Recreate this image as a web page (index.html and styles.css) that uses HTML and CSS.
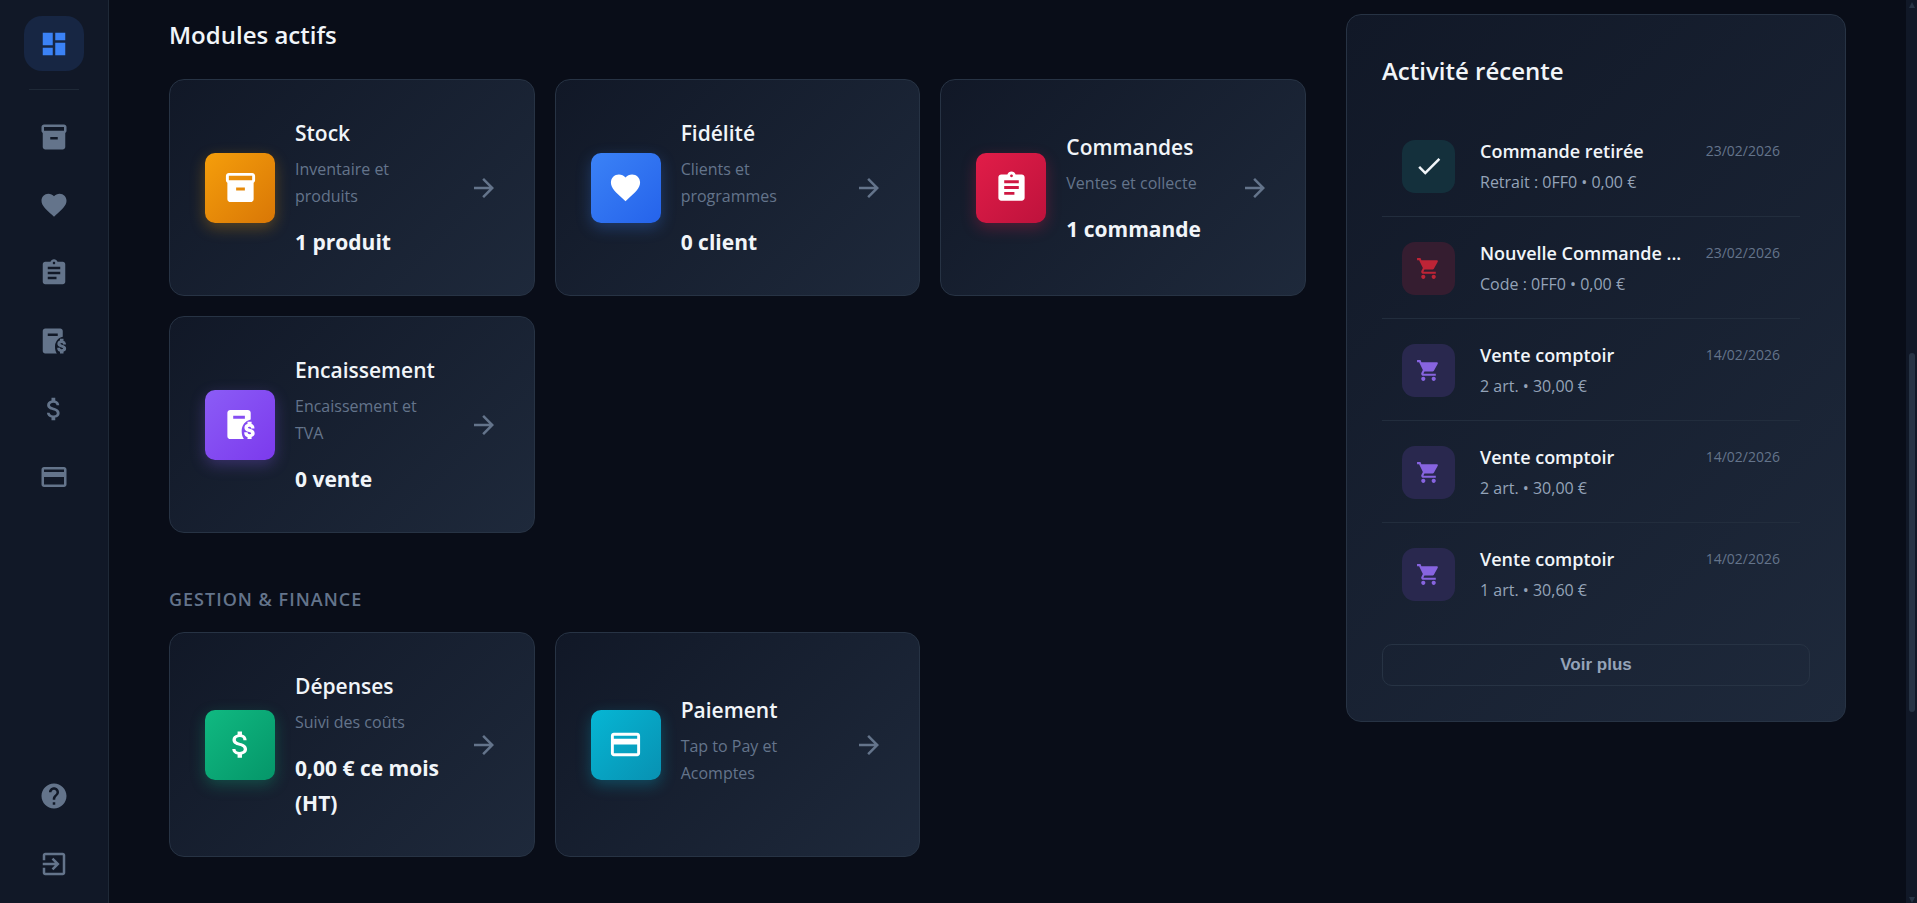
FILE: index.html
```html
<!DOCTYPE html>
<html lang="fr">
<head>
  <meta charset="UTF-8">
  <meta name="viewport" content="width=device-width, initial-scale=1.0">
  <title>Tableau de bord</title>
  <link rel="stylesheet" href="styles.css">
</head>
<body>
  <!-- Shared icons -->
  <svg class="sprite" aria-hidden="true">
    <symbol id="i-dashboard" viewBox="0 0 24 24"><path d="M3 13h8V3H3v10zm0 8h8v-6H3v6zm10 0h8V11h-8v10zm0-18v6h8V3h-8z"/></symbol>
    <symbol id="i-stock" viewBox="0 0 24 24"><path d="M20 2H4c-1 0-2 .9-2 2v3.01c0 .72.43 1.34 1 1.69V20c0 1.1 1.1 2 2 2h14c.9 0 2-.9 2-2V8.7c.57-.35 1-.97 1-1.69V4c0-1.1-1-2-2-2zm-5 12H9v-2h6v2zm5-7H4V4h16v3z"/></symbol>
    <symbol id="i-heart" viewBox="0 0 24 24"><path d="M12 21.35l-1.45-1.32C5.4 15.36 2 12.28 2 8.5 2 5.42 4.42 3 7.5 3c1.74 0 3.41.81 4.5 2.09C13.09 3.81 14.76 3 16.5 3 19.58 3 22 5.42 22 8.5c0 3.78-3.4 6.86-8.55 11.54L12 21.35z"/></symbol>
    <symbol id="i-orders" viewBox="0 0 24 24"><path d="M19 3h-4.18C14.4 1.84 13.3 1 12 1c-1.3 0-2.4.84-2.82 2H5c-1.1 0-2 .9-2 2v14c0 1.1.9 2 2 2h14c1.1 0 2-.9 2-2V5c0-1.1-.9-2-2-2zm-7 0c.55 0 1 .45 1 1s-.45 1-1 1-1-.45-1-1 .45-1 1-1zm2 14H7v-2h7v2zm3-4H7v-2h10v2zm0-4H7V7h10v2z"/></symbol>
    <symbol id="i-register" viewBox="0 0 24 24">
      <path fill-rule="evenodd" d="M5 2h12c1.1 0 2 .9 2 2v4.6C15.2 9.6 12.8 12.5 12.8 16.5c0 2.2.5 4 1.5 5.5H5c-1.1 0-2-.9-2-2V4c0-1.1.9-2 2-2zm2 4v2h8V6H7z"/>
      <path stroke="currentColor" stroke-width="1.7" transform="translate(11.3 8.9) scale(.6)" d="M11.8 10.9c-2.27-.59-3-1.2-3-2.15 0-1.09 1.01-1.85 2.7-1.85 1.78 0 2.44.85 2.5 2.1h2.21c-.07-1.72-1.12-3.3-3.21-3.81V3h-3v2.16c-1.94.42-3.5 1.68-3.5 3.61 0 2.31 1.91 3.46 4.7 4.13 2.5.6 3 1.48 3 2.41 0 .69-.49 1.79-2.7 1.79-2.06 0-2.87-.92-2.98-2.1h-2.2c.12 2.19 1.76 3.42 3.68 3.83V21h3v-2.15c1.95-.37 3.5-1.5 3.5-3.55 0-2.84-2.43-3.81-4.7-4.4z"/>
    </symbol>
    <symbol id="i-money" viewBox="0 0 24 24"><path d="M11.8 10.9c-2.27-.59-3-1.2-3-2.15 0-1.09 1.01-1.85 2.7-1.85 1.78 0 2.44.85 2.5 2.1h2.21c-.07-1.72-1.12-3.3-3.21-3.81V3h-3v2.16c-1.94.42-3.5 1.68-3.5 3.61 0 2.31 1.91 3.46 4.7 4.13 2.5.6 3 1.48 3 2.41 0 .69-.49 1.79-2.7 1.79-2.06 0-2.87-.92-2.98-2.1h-2.2c.12 2.19 1.76 3.42 3.68 3.83V21h3v-2.15c1.95-.37 3.5-1.5 3.5-3.55 0-2.84-2.43-3.81-4.7-4.4z"/></symbol>
    <symbol id="i-card" viewBox="0 0 24 24"><path d="M20 4H4c-1.11 0-1.99.89-1.99 2L2 18c0 1.11.89 2 2 2h16c1.11 0 2-.89 2-2V6c0-1.11-.89-2-2-2zm0 14H4v-6h16v6zm0-10H4V6h16v2z"/></symbol>
    <symbol id="i-help" viewBox="0 0 24 24"><path d="M12 2C6.48 2 2 6.48 2 12s4.48 10 10 10 10-4.48 10-10S17.52 2 12 2zm1 17h-2v-2h2v2zm2.07-7.75l-.9.92C13.45 12.9 13 13.5 13 15h-2v-.5c0-1.1.45-2.1 1.17-2.83l1.24-1.26c.37-.36.59-.86.59-1.41 0-1.1-.9-2-2-2s-2 .9-2 2H8c0-2.21 1.79-4 4-4s4 1.79 4 4c0 .88-.36 1.68-.93 2.25z"/></symbol>
    <symbol id="i-exit" viewBox="0 0 24 24"><path d="M10.09 15.59L11.5 17l5-5-5-5-1.41 1.41L12.67 11H3v2h9.67l-2.58 2.59zM19 3H5c-1.11 0-2 .9-2 2v4h2V5h14v14H5v-4H3v4c0 1.1.89 2 2 2h14c1.1 0 2-.9 2-2V5c0-1.1-.9-2-2-2z"/></symbol>
    <symbol id="i-arrow" viewBox="0 0 24 24"><path d="M12 4l-1.41 1.41L16.17 11H4v2h12.17l-5.58 5.59L12 20l8-8z"/></symbol>
    <symbol id="i-check" viewBox="0 0 24 24"><path d="M9 16.17L4.83 12l-1.42 1.41L9 19 21 7l-1.41-1.41z"/></symbol>
    <symbol id="i-cart" viewBox="0 0 24 24"><path d="M7 18c-1.1 0-1.99.9-1.99 2S5.9 22 7 22s2-.9 2-2-.9-2-2-2zM1 2v2h2l3.6 7.59-1.35 2.45c-.16.28-.25.61-.25.96 0 1.1.9 2 2 2h12v-2H7.42c-.14 0-.25-.11-.25-.25l.03-.12.9-1.63h7.45c.75 0 1.41-.41 1.75-1.03l3.58-6.49c.08-.14.12-.31.12-.48 0-.55-.45-1-1-1H5.21l-.94-2H1zm16 16c-1.1 0-1.99.9-1.99 2s.89 2 1.99 2 2-.9 2-2-.9-2-2-2z"/></symbol>
  </svg>

  <div class="app">
    <!-- Sidebar -->
    <nav class="sidebar" aria-label="Navigation">
      <a class="nav-item active" href="#" aria-label="Tableau de bord"><svg><use href="#i-dashboard"/></svg></a>
      <div class="nav-divider"></div>
      <a class="nav-item" href="#" aria-label="Stock"><svg><use href="#i-stock"/></svg></a>
      <a class="nav-item" href="#" aria-label="Fidélité"><svg><use href="#i-heart"/></svg></a>
      <a class="nav-item" href="#" aria-label="Commandes"><svg><use href="#i-orders"/></svg></a>
      <a class="nav-item" href="#" aria-label="Encaissement"><svg><use href="#i-register"/></svg></a>
      <a class="nav-item" href="#" aria-label="Dépenses"><svg><use href="#i-money"/></svg></a>
      <a class="nav-item" href="#" aria-label="Paiement"><svg><use href="#i-card"/></svg></a>
      <div class="nav-spacer"></div>
      <a class="nav-item" href="#" aria-label="Aide"><svg><use href="#i-help"/></svg></a>
      <a class="nav-item" href="#" aria-label="Déconnexion"><svg><use href="#i-exit"/></svg></a>
    </nav>

    <main class="content">
      <div class="modules">
        <h2 class="section-title">Modules actifs</h2>
        <div class="module-grid">
          <a class="module-card" href="#">
            <span class="module-icon orange"><svg><use href="#i-stock"/></svg></span>
            <span class="module-info">
              <span class="module-name">Stock</span>
              <span class="module-desc">Inventaire et produits</span>
              <span class="module-stat">1 produit</span>
            </span>
            <svg class="module-arrow"><use href="#i-arrow"/></svg>
          </a>
          <a class="module-card" href="#">
            <span class="module-icon blue"><svg><use href="#i-heart"/></svg></span>
            <span class="module-info">
              <span class="module-name">Fidélité</span>
              <span class="module-desc">Clients et programmes</span>
              <span class="module-stat">0 client</span>
            </span>
            <svg class="module-arrow"><use href="#i-arrow"/></svg>
          </a>
          <a class="module-card" href="#">
            <span class="module-icon red"><svg><use href="#i-orders"/></svg></span>
            <span class="module-info">
              <span class="module-name">Commandes</span>
              <span class="module-desc">Ventes et collecte</span>
              <span class="module-stat">1 commande</span>
            </span>
            <svg class="module-arrow"><use href="#i-arrow"/></svg>
          </a>
          <a class="module-card" href="#">
            <span class="module-icon purple"><svg><use href="#i-register"/></svg></span>
            <span class="module-info">
              <span class="module-name">Encaissement</span>
              <span class="module-desc">Encaissement et TVA</span>
              <span class="module-stat">0 vente</span>
            </span>
            <svg class="module-arrow"><use href="#i-arrow"/></svg>
          </a>
        </div>

        <h3 class="group-title">Gestion &amp; Finance</h3>
        <div class="module-grid">
          <a class="module-card" href="#">
            <span class="module-icon green"><svg><use href="#i-money"/></svg></span>
            <span class="module-info">
              <span class="module-name">Dépenses</span>
              <span class="module-desc">Suivi des coûts</span>
              <span class="module-stat">0,00 € ce mois (HT)</span>
            </span>
            <svg class="module-arrow"><use href="#i-arrow"/></svg>
          </a>
          <a class="module-card" href="#">
            <span class="module-icon cyan"><svg><use href="#i-card"/></svg></span>
            <span class="module-info">
              <span class="module-name">Paiement</span>
              <span class="module-desc">Tap to Pay et Acomptes</span>
            </span>
            <svg class="module-arrow"><use href="#i-arrow"/></svg>
          </a>
        </div>
      </div>

      <!-- Recent activity -->
      <aside class="activity">
        <h2 class="section-title">Activité récente</h2>
        <ul class="activity-list">
          <li class="activity-item">
            <span class="activity-icon done"><svg><use href="#i-check"/></svg></span>
            <div class="activity-text">
              <div class="activity-head"><strong>Commande retirée</strong><time>23/02/2026</time></div>
              <p>Retrait : 0FF0 • 0,00 €</p>
            </div>
          </li>
          <li class="activity-item">
            <span class="activity-icon order"><svg><use href="#i-cart"/></svg></span>
            <div class="activity-text">
              <div class="activity-head"><strong>Nouvelle Commande ...</strong><time>23/02/2026</time></div>
              <p>Code : 0FF0 • 0,00 €</p>
            </div>
          </li>
          <li class="activity-item">
            <span class="activity-icon sale"><svg><use href="#i-cart"/></svg></span>
            <div class="activity-text">
              <div class="activity-head"><strong>Vente comptoir</strong><time>14/02/2026</time></div>
              <p>2 art. • 30,00 €</p>
            </div>
          </li>
          <li class="activity-item">
            <span class="activity-icon sale"><svg><use href="#i-cart"/></svg></span>
            <div class="activity-text">
              <div class="activity-head"><strong>Vente comptoir</strong><time>14/02/2026</time></div>
              <p>2 art. • 30,00 €</p>
            </div>
          </li>
          <li class="activity-item">
            <span class="activity-icon sale"><svg><use href="#i-cart"/></svg></span>
            <div class="activity-text">
              <div class="activity-head"><strong>Vente comptoir</strong><time>14/02/2026</time></div>
              <p>1 art. • 30,60 €</p>
            </div>
          </li>
        </ul>
        <button class="more-btn" type="button">Voir plus</button>
      </aside>
    </main>

    <div class="scroll-track" aria-hidden="true">
      <span class="scroll-up"></span>
      <span class="scroll-thumb"></span>
      <span class="scroll-down"></span>
    </div>
  </div>
</body>
</html>
```
FILE: styles.css
```css
* {
  box-sizing: border-box;
}
body {
  margin: 0;
  font-family: "Segoe UI", "Open Sans", "Noto Sans", sans-serif;
  background: #090d18;
  color: #f1f5f9;
}
h2, h3, p, ul {
  margin: 0;
  padding: 0;
}
a {
  color: inherit;
  text-decoration: none;
}
svg {
  display: block;
  fill: currentColor;
}
.sprite {
  display: none;
}
.app {
  display: flex;
  height: 100vh;
  overflow: hidden;
}

/* Sidebar */
.sidebar {
  display: flex;
  flex-direction: column;
  align-items: center;
  gap: 13px;
  flex: 0 0 109px;
  padding: 16px 0 12px;
  background: #111827;
  border-right: 1px solid #1f2937;
}
.nav-item {
  display: flex;
  align-items: center;
  justify-content: center;
  width: 60px;
  height: 55px;
  border-radius: 18px;
  color: #64748b;
}
.nav-item svg {
  width: 30px;
  height: 30px;
}
.nav-item.active {
  background: #172643;
  color: #3b82f6;
}
.nav-divider {
  width: 50px;
  height: 1px;
  margin: 5px 0 6px;
  background: #1f2937;
}
.nav-spacer {
  flex: 1;
}

/* Content */
.content {
  flex: 1;
  display: grid;
  grid-template-columns: minmax(0, 1fr) 500px;
  align-items: start;
  gap: 40px;
  padding: 14px 60px;
}
.section-title {
  font-size: 24px;
  font-weight: 600;
  line-height: 42px;
}
.modules .section-title {
  margin-bottom: 23px;
}
.group-title {
  margin: 51px 0 18px;
  font-size: 18px;
  font-weight: 600;
  line-height: 30px;
  letter-spacing: 1px;
  text-transform: uppercase;
  color: #64748b;
}
.module-grid {
  display: grid;
  grid-template-columns: repeat(3, minmax(0, 1fr));
  gap: 20px;
}
.module-card {
  display: flex;
  align-items: center;
  gap: 20px;
  padding: 35px;
  border: 1px solid #273344;
  border-radius: 15px;
  background: linear-gradient(135deg, #111827, #1e293b);
}
.module-icon {
  display: flex;
  align-items: center;
  justify-content: center;
  flex: 0 0 70px;
  height: 70px;
  border-radius: 10px;
  color: #fff;
}
.module-icon svg {
  width: 35px;
  height: 35px;
}
.orange {
  background: linear-gradient(135deg, #f59e0b, #d97706);
  box-shadow: 0 5px 15px rgba(245, 158, 11, 0.3);
}
.blue {
  background: linear-gradient(135deg, #3b82f6, #2563eb);
  box-shadow: 0 5px 15px rgba(59, 130, 246, 0.3);
}
.red {
  background: linear-gradient(135deg, #e11d48, #be123c);
  box-shadow: 0 5px 15px rgba(225, 29, 72, 0.3);
}
.purple {
  background: linear-gradient(135deg, #8b5cf6, #7c3aed);
  box-shadow: 0 5px 15px rgba(139, 92, 246, 0.3);
}
.green {
  background: linear-gradient(135deg, #10b981, #059669);
  box-shadow: 0 5px 15px rgba(16, 185, 129, 0.3);
}
.cyan {
  background: linear-gradient(135deg, #06b6d4, #0891b2);
  box-shadow: 0 5px 15px rgba(6, 182, 212, 0.3);
}
.module-info {
  display: flex;
  flex-direction: column;
  gap: 5px;
  flex: 1;
  min-width: 0;
}
.module-name {
  font-size: 21px;
  font-weight: 600;
  line-height: 36px;
}
.module-desc {
  margin-bottom: 10px;
  font-size: 16px;
  line-height: 27px;
  color: #64748b;
}
.module-stat {
  font-size: 21px;
  font-weight: 700;
  line-height: 35px;
}
.module-arrow {
  flex: none;
  width: 30px;
  height: 30px;
  color: #64748b;
}

/* Activity */
.activity {
  padding: 35px;
  border: 1px solid #273344;
  border-radius: 15px;
  background: linear-gradient(135deg, #111827, #1e293b);
}
.activity .section-title {
  margin-bottom: 23px;
}
.activity-list {
  padding-right: 10px;
  list-style: none;
}
.activity-item {
  display: flex;
  align-items: center;
  gap: 25px;
  padding: 22px 20px 21px;
  border-bottom: 1px solid #222d3d;
}
.activity-item:last-child {
  border-bottom: none;
}
.activity-icon {
  display: flex;
  align-items: center;
  justify-content: center;
  flex: 0 0 53px;
  height: 53px;
  border-radius: 13px;
}
.activity-icon svg {
  width: 25px;
  height: 25px;
}
.activity-icon.done {
  background: #14303c;
  color: #f1f5f9;
}
.activity-icon.done svg {
  width: 30px;
  height: 30px;
}
.order {
  background: #351d30;
  color: #be2436;
}
.sale {
  background: #29284e;
  color: #8764e0;
}
.activity-text {
  flex: 1;
  min-width: 0;
}
.activity-head {
  display: flex;
  justify-content: space-between;
  align-items: center;
  line-height: 28px;
  white-space: nowrap;
}
.activity-head strong {
  font-size: 18px;
  font-weight: 600;
}
.activity-head time {
  font-size: 14px;
  color: #64748b;
}
.activity-text p {
  margin-top: 4px;
  font-size: 16px;
  line-height: 26px;
  color: #94a3b8;
}
.more-btn {
  display: block;
  width: 100%;
  height: 42px;
  margin-top: 20px;
  border: 1px solid #273344;
  border-radius: 10px;
  background: transparent;
  color: #94a3b8;
  font-family: Arial, "Liberation Sans", sans-serif;
  font-size: 17px;
  font-weight: 600;
}

/* Scrollbar */
.scroll-track {
  display: grid;
  grid-template-rows: 16px 337px 359px 1fr auto;
  justify-items: center;
  flex: 0 0 11px;
  background: #111827;
}
.scroll-up, .scroll-down {
  border: 3px solid transparent;
}
.scroll-up {
  align-self: start;
  margin-top: 2px;
  border-top: none;
  border-bottom: 6px solid #273344;
}
.scroll-thumb {
  grid-row: 3;
  width: 6px;
  border-radius: 3px;
  background: #273344;
}
.scroll-down {
  grid-row: 5;
  border-bottom: none;
  border-top: 6px solid #273344;
}
```
